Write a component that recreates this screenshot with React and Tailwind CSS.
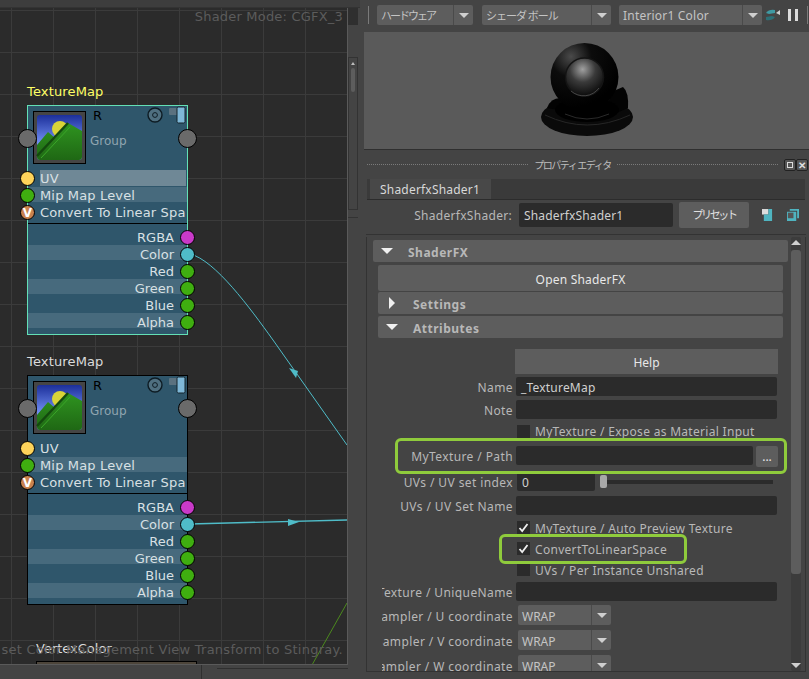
import React from 'react';

const inputsList = [
  { name: 'UV', port: 'bg-[#fdd35a]' },
  { name: 'Mip Map Level', port: 'bg-[#3fae10]' },
  { name: 'Convert To Linear Spa', port: 'bg-[#c9824e]', v: true },
];

const outputsList = [
  { name: 'RGBA', port: 'bg-[#c93ac9]' },
  { name: 'Color', port: 'bg-[#4fbcc8]', band: true },
  { name: 'Red', port: 'bg-[#3fae10]' },
  { name: 'Green', port: 'bg-[#3fae10]', band: true },
  { name: 'Blue', port: 'bg-[#3fae10]' },
  { name: 'Alpha', port: 'bg-[#3fae10]', band: true },
];

function Thumb({ id }) {
  return (
    <svg viewBox="0 0 53 53" className="w-[53px] h-[53px] block">
      <defs>
        <linearGradient id={`sky${id}`} x1="0" y1="0" x2="0" y2="1">
          <stop offset="0" stopColor="#1c2f9a" />
          <stop offset="0.6" stopColor="#6f8cf0" />
        </linearGradient>
        <linearGradient id={`hill${id}`} x1="0" y1="0" x2="0" y2="1">
          <stop offset="0" stopColor="#2f9420" />
          <stop offset="1" stopColor="#1f6814" />
        </linearGradient>
      </defs>
      <rect x="0.5" y="0.5" width="52" height="52" fill="#454545" stroke="#000" />
      <rect x="4" y="4" width="45" height="45" rx="3" fill={`url(#sky${id})`} />
      <circle cx="27" cy="18" r="8" fill="#d8d438" />
      <path d="M4 34 L15 21 L22 27 L35 12 L49 20 V46 Q49 49 46 49 H7 Q4 49 4 46 Z" fill={`url(#hill${id})`} />
      <path d="M4 45 L35 12" stroke="#134a0e" strokeWidth="2.5" fill="none" />
      <path d="M8 47 L37 16" stroke="#3aa628" strokeWidth="1" fill="none" />
    </svg>
  );
}

function NodeIcons() {
  return (
    <svg viewBox="0 0 42 18" className="w-[42px] h-[18px] block">
      <circle cx="8" cy="9" r="7" fill="#4f6f80" stroke="#0e1c24" strokeWidth="1.4" />
      <circle cx="8" cy="9" r="2.4" fill="none" stroke="#0e1c24" />
      <rect x="22" y="2" width="10" height="7" rx="1" fill="#5b7280" />
      <rect x="30" y="1" width="8" height="16" rx="1.5" fill="#7fb8d8" stroke="#14242d" />
    </svg>
  );
}

function TextureNode({ selected, top, id }) {
  const borderCls = selected ? 'border-[#63e0b6]' : 'border-black';
  const labelCls = selected ? 'text-[#ffff66]' : 'text-[#dcdcdc]';
  return (
    <div className="absolute left-[27px] w-[161px]" style={{ top }}>
      <div className={`absolute left-0 -top-[22px] text-[13px] leading-[18px] tracking-[0.15px] ${labelCls}`}>TextureMap</div>
      <div className={`relative h-[230px] border ${borderCls} bg-[#2f566b]`}>
        <div className="relative h-[64px]">
          <div className="absolute left-[5px] top-[5px]"><Thumb id={id} /></div>
          <div className="absolute left-[65px] top-[1px] text-[13px] leading-[18px] text-black">R</div>
          <div className="absolute left-[62px] top-[26px] text-[12px] leading-[18px] text-[#8fa5b0]">Group</div>
          <div className="absolute right-[-2px] top-0"><NodeIcons /></div>
          <div className="absolute -left-[10px] top-[23px] w-[19px] h-[19px] rounded-full bg-[#6a6a6a] border border-black" />
          <div className="absolute -right-[10px] top-[23px] w-[19px] h-[19px] rounded-full bg-[#6a6a6a] border border-black" />
        </div>
        <div className="h-[53px]">
          {inputsList.map((it, i) => (
            <div key={it.name} className="relative h-[17px] pl-[12px]">
              {i === 0 && selected && <div className="absolute left-[12px] right-[1px] top-0 h-[16px] bg-[#6f8896]" />}
              {i === 1 && <div className="absolute left-0 right-0 top-0 h-[15px] bg-[#476a7d]" />}
              <div className="relative text-[13px] leading-[17px] tracking-[0.15px] whitespace-nowrap overflow-hidden text-[#d8e0e4]">{it.name}</div>
              <div className={`absolute -left-[8px] top-[1px] w-[15px] h-[15px] rounded-full border border-black flex items-center justify-center text-[12px] leading-none font-bold text-white ${it.port}`}>
                {it.v ? 'V' : ''}
              </div>
            </div>
          ))}
        </div>
        <div className="border-t border-black pt-[4px]">
          {outputsList.map((it) => (
            <div key={it.name} className="relative h-[17px] pr-[13px] text-right">
              {it.band && <div className="absolute left-0 right-0 top-0 h-[15px] bg-[#476a7d]" />}
              <div className="relative text-[13px] leading-[19px] text-[#d8e0e4]">{it.name}</div>
              <div className={`absolute -right-[8px] top-[2px] w-[15px] h-[15px] rounded-full border border-black ${it.port}`} />
            </div>
          ))}
        </div>
      </div>
    </div>
  );
}

function GraphPanel() {
  return (
    <div className="w-[360px] h-full shrink-0 flex flex-col bg-[#444444]">
      <div className="h-[8px] shrink-0 bg-[#3d3d3d] border-b border-[#333333]" />
      <div className="flex flex-1 min-h-0">
        <div className="w-[348px] flex flex-col">
          <div className="relative h-[657px] overflow-hidden border-r border-b border-[#5a5a5a] bg-[#2b2b2b] bg-[linear-gradient(#3b3b3b_1px,transparent_1px),linear-gradient(90deg,#3b3b3b_1px,transparent_1px)] bg-[size:42px_42px] bg-[position:11px_2px] font-['DejaVu_Sans',sans-serif]">
            <div className="absolute right-[4px] top-[1px] text-[13px] leading-[16px] tracking-[0.2px] text-[#5c5c5c] whitespace-nowrap">Shader Mode: CGFX_3</div>

            <svg className="absolute left-0 top-0 w-[347px] h-[657px]" viewBox="0 0 347 657">
              <path d="M190 246 C215 252 250 300 273 332 L347 437" fill="none" stroke="#4fbcc8" strokeWidth="1" />
              <polygon points="289,360 298,363 296,370" fill="#4fbcc8" />
              <path d="M190 516 L347 512" fill="none" stroke="#4fbcc8" strokeWidth="1.4" />
              <polygon points="288,511 299,514 288,518" fill="#4fbcc8" />
              <path d="M347 595 L312 657" fill="none" stroke="#4c8a1e" strokeWidth="1" />
            </svg>

            <TextureNode selected top={97} id="a" />
            <TextureNode top={367} id="b" />

            <div className="absolute left-[36px] top-[632px] text-[13px] leading-[18px] text-[#dcdcdc]">VertexColor</div>
            <div className="absolute left-[36px] top-[653px] w-[161px] h-[8px] border border-black bg-[#4d453a]" />
            <div className="absolute right-[4px] top-[634px] text-[13px] leading-[16px] tracking-[0.25px] text-[#5c5c5c] whitespace-nowrap">set Color Management View Transform to Stingray.</div>
          </div>
          <div className="flex-1 flex">
            <div className="w-[202px] border-r border-[#2f2f2f]" />
            <div className="ml-[15px] flex-1 h-[4px] border-b border-[#2f2f2f]" />
          </div>
        </div>
        <div className="w-[10px] flex flex-col">
          <div className="h-[17px] bg-[#2f2f2f]" />
          <div className="mt-[32px] h-[153px] border border-[#333333] flex flex-col items-center">
            <div className="mt-[4px] w-0 h-0 border-x-[2px] border-x-transparent border-b-[3px] border-b-[#bdbdbd]" />
            <div className="mt-[3px] w-[4px] h-[24px] rounded-sm bg-[#5d5d5d]" />
          </div>
          <div className="mt-[7px] border-t border-[#333333]" />
        </div>
      </div>
    </div>
  );
}

function Combo({ label, className, labelClass = '' }) {
  return (
    <div className={`h-[20px] flex rounded-[2px] bg-[#5d5d5d] ${className}`}>
      <div className={`flex-1 min-w-0 pl-[4px] leading-[20px] text-[#c4c4c4] whitespace-nowrap overflow-hidden ${labelClass}`}>{label}</div>
      <div className="w-[20px] border-l border-[#4a4a4a] flex items-center justify-center">
        <div className="w-0 h-0 border-x-[5px] border-x-transparent border-t-[5px] border-t-[#cfcfcf]" />
      </div>
    </div>
  );
}

function BallPreview() {
  return (
    <svg viewBox="0 0 100 96" className="w-[100px] h-[96px] mb-[2px]">
      <defs>
        <radialGradient id="lens" cx="0.45" cy="0.3" r="0.75">
          <stop offset="0" stopColor="#a0a0a0" />
          <stop offset="0.45" stopColor="#3a3a3a" />
          <stop offset="1" stopColor="#050505" />
        </radialGradient>
        <radialGradient id="shell" cx="0.3" cy="0.2" r="0.75">
          <stop offset="0" stopColor="#4a4a4a" />
          <stop offset="0.4" stopColor="#0c0c0c" />
          <stop offset="1" stopColor="#000" />
        </radialGradient>
      </defs>
      <ellipse cx="50" cy="75" rx="46" ry="19" fill="#0a0a0a" />
      <path d="M8 73 Q50 93 93 73" fill="none" stroke="#262626" strokeWidth="1" />
      <path d="M12 62 Q50 80 88 62" fill="none" stroke="#1e1e1e" strokeWidth="1" />
      <path d="M74 50 L86 45 Q92 50 91 66 L68 76 Z" fill="#030303" />
      <path d="M10 66 Q14 55 25 56 L32 70 Z" fill="#030303" />
      <ellipse cx="50" cy="68" rx="32" ry="12" fill="#000" />
      <circle cx="47.5" cy="35" r="34" fill="url(#shell)" />
      <circle cx="47.5" cy="35" r="19" fill="url(#lens)" stroke="#141414" strokeWidth="1.5" />
      <path d="M62 46 A19 19 0 0 1 34 49" fill="none" stroke="#6a6a6a" strokeWidth="0.6" />
      <path d="M28 72 Q50 82 72 72" fill="none" stroke="#2a2a2a" strokeWidth="1" />
    </svg>
  );
}

function FieldLabel({ children, className = '' }) {
  return (
    <div className={`w-[131px] h-[19px] shrink-0 flex justify-end overflow-hidden text-[12px] leading-[21px] text-[#b8b8b8] whitespace-nowrap tracking-[0.4px] ${className}`}>
      {children}
    </div>
  );
}

function TextField({ label, value, className = '' }) {
  return (
    <div className={`flex h-[19px] ${className}`}>
      <FieldLabel>{label}</FieldLabel>
      <div className="ml-[3px] w-[261px] h-[19px] rounded-[2px] bg-[#2b2b2b] pl-[5px] text-[12px] leading-[21px] tracking-[0.2px] text-[#d0d0d0]">{value}</div>
    </div>
  );
}

function CheckRow({ label, checked, className = '' }) {
  return (
    <div className={`flex items-center h-[21px] pl-[135px] ${className}`}>
      <div className="w-[13px] h-[13px] bg-[#2b2b2b] flex items-center justify-center">
        {checked && (
          <svg viewBox="0 0 13 13" className="w-[13px] h-[13px]">
            <path d="M2.5 7 L5.2 10 L10.5 3" fill="none" stroke="#eeeeee" strokeWidth="1.8" />
          </svg>
        )}
      </div>
      <div className="ml-[5px] pt-[2px] text-[12px] leading-[18px] tracking-[0.3px] text-[#b8b8b8] whitespace-nowrap">{label}</div>
    </div>
  );
}

function WrapRow({ label, className = '' }) {
  return (
    <div className={`flex h-[20px] ${className}`}>
      <FieldLabel className="pt-[1px] h-[20px]">{label}</FieldLabel>
      <div className="ml-[5px]"><Combo label="WRAP" className="w-[93px]" labelClass="text-[12px] pt-[2px]" /></div>
    </div>
  );
}

function SectionHead({ title, open, className = '' }) {
  return (
    <div className={`h-[22px] flex items-center rounded-[2px] bg-[#5d5d5d] ${className}`}>
      <div className="w-[35px] pl-[8px] flex items-center">
        {open ? (
          <div className="w-0 h-0 border-x-[6px] border-x-transparent border-t-[6px] border-t-[#f0f0f0]" />
        ) : (
          <div className="ml-[3px] w-0 h-0 border-y-[6px] border-y-transparent border-l-[6px] border-l-[#f0f0f0]" />
        )}
      </div>
      <div className="pt-[3px] text-[12px] font-bold leading-[19px] tracking-[0.5px] text-[#b8b8b8]">{title}</div>
    </div>
  );
}

function GreenBox({ className }) {
  return <div className={`absolute border-[3px] border-[#8fcb3c] rounded-[6px] pointer-events-none ${className}`} />;
}

function RightPanel() {
  return (
    <div className="flex-1 min-w-0 h-full flex flex-col pl-[4px] bg-[#444444] font-['Noto_Sans','Noto_Sans_CJK_JP',sans-serif]">
      {/* toolbar */}
      <div className="h-[32px] shrink-0 flex items-center -ml-[4px] pl-[8px] pb-[2px]">
        <div className="w-[1px] h-[18px] bg-[#7a7a7a]" />
        <Combo label="ハードウェア" className="ml-[8px] w-[96px]" labelClass="text-[11px] tracking-[-2px] pt-[1px]" />
        <Combo label="シェーダ ボール" className="ml-[9px] w-[129px]" labelClass="text-[11px] tracking-[-1px] pt-[1px]" />
        <Combo label="Interior1 Color" className="ml-[8px] w-[143px]" labelClass="text-[12px] tracking-[0.2px] pt-[1px]" />
        <svg viewBox="0 0 16 14" className="ml-[3px] w-[16px] h-[14px]">
          <path d="M1 5 Q4 1 10 2 L10 5 L4 6 Z" fill="#3f9aa3" />
          <path d="M10 9 Q7 13 1 12 L1 9 L7 8 Z" fill="#2c6f76" />
          <path d="M11 5 L15 2 V7 Z" fill="#cfcfcf" />
        </svg>
        <div className="ml-[7px] w-[3px] h-[12px] bg-[#dcdcdc]" />
        <div className="ml-[4px] w-[3px] h-[12px] bg-[#dcdcdc]" />
        <div className="ml-[9px] w-[1px] h-[18px] bg-[#7a7a7a]" />
      </div>

      {/* preview */}
      <div className="h-[118px] shrink-0 flex items-center justify-center bg-[#5a5a5a] border-b border-[#2f2f2f]">
        <BallPreview />
      </div>

      {/* title bar */}
      <div className="h-[29px] shrink-0 flex items-center pl-[3px] pr-[1px]">
        <div className="flex-1 border-t border-dotted border-[#7a7a7a]" />
        <div className="px-[6px] text-[10px] leading-[16px] tracking-[-1.5px] text-[#bdbdbd] whitespace-nowrap">プロパティ エディタ</div>
        <div className="flex-1 border-t border-dotted border-[#7a7a7a]" />
        <div className="ml-[6px] w-[12px] h-[12px] rounded-[2px] border border-[#222222] bg-[#555555] flex items-center justify-center">
          <div className="w-[6px] h-[6px] border border-[#dddddd]" />
        </div>
        <div className="w-[12px] h-[12px] rounded-[2px] border border-[#222222] bg-[#555555] text-[10px] leading-[10px] font-bold text-center text-[#dddddd]">✕</div>
      </div>

      {/* attribute editor frame */}
      <div className="flex-1 min-h-0 mr-[3px] ml-[2px] flex flex-col">
        <div className="h-[21px] shrink-0 mx-[1px] flex bg-[#3a3a3a] border-b border-[#2c2c2c]">
          <div className="ml-[3px] w-[121px] pl-[10px] bg-[#484848] text-[12px] leading-[22px] tracking-[0.2px] text-[#d8d8d8]">ShaderfxShader1</div>
        </div>
        <div className="h-[30px] shrink-0 flex items-center">
          <div className="w-[146px] pt-[1px] text-right text-[12px] tracking-[0.3px] text-[#b8b8b8] whitespace-nowrap">ShaderfxShader:</div>
          <div className="ml-[7px] w-[154px] h-[24px] rounded-[2px] bg-[#2b2b2b] pl-[5px] text-[12px] leading-[25px] tracking-[0.15px] text-[#d0d0d0]">ShaderfxShader1</div>
          <div className="ml-[6px] w-[70px] h-[26px] rounded-[2px] bg-[#5d5d5d] text-center text-[11px] leading-[26px] tracking-[-2.4px] text-[#e0e0e0]">プリセット</div>
          <svg viewBox="0 0 12 13" className="ml-[13px] w-[11px] h-[12px]">
            <rect x="0" y="0" width="7" height="6" fill="#dddddd" />
            <path d="M7 0 H11 V13 H2 V6 H7 Z" fill="#4fb4c0" />
          </svg>
          <svg viewBox="0 0 13 13" className="ml-[14px] w-[12px] h-[12px]">
            <path d="M3 0 H13 V10 H11 V2 H3 Z" fill="#4fb4c0" />
            <rect x="0" y="3" width="10" height="10" fill="#4fb4c0" />
            <rect x="1" y="4" width="6" height="6" fill="#555555" />
          </svg>
        </div>
        <div className="h-[10px] shrink-0 mt-[4px] border-t border-[#333333]" />

        <div className="relative h-[434px] shrink-0 overflow-hidden flex -mt-[7px] border-x border-[#333333]">
          <div className="w-[415px] shrink-0 ml-[6px] mt-[3px]">
            <SectionHead title="ShaderFX" open />
            <div className="mx-[5px]">
              <div className="mt-[3px] h-[26px] rounded-[2px] bg-[#5d5d5d] text-center text-[12px] leading-[29px] tracking-[0.2px] text-[#e8e8e8]">Open ShaderFX</div>
              <SectionHead title="Settings" className="mt-[1px]" />
              <SectionHead title="Attributes" open className="mt-[2px]" />
              <div className="-ml-[1px] pl-[5px]">
                <div className="mt-[11px] ml-[133px] w-[263px] h-[25px] bg-[#5d5d5d] text-center text-[12px] leading-[27px] text-[#e8e8e8]">Help</div>
                <TextField label="Name" value="_TextureMap" className="mt-[3px]" />
                <TextField label="Note" className="mt-[4px]" />
                <CheckRow label="MyTexture / Expose as Material Input" className="mt-[2px] !h-[20px]" />
                <div className="relative mt-[5px] flex h-[19px]">
                  <GreenBox className="left-[13px] w-[392px] -top-[8px] h-[36px]" />
                  <FieldLabel>MyTexture / Path</FieldLabel>
                  <div className="ml-[3px] w-[237px] h-[19px] rounded-[2px] bg-[#2b2b2b]" />
                  <div className="ml-[3px] w-[22px] h-[21px] rounded-[2px] bg-[#5d5d5d] text-center text-[12px] leading-[21px] text-[#e8e8e8]">...</div>
                </div>
                <div className="mt-[7px] flex items-center h-[19px]">
                  <FieldLabel>UVs / UV set index</FieldLabel>
                  <div className="ml-[4px] w-[78px] h-[19px] rounded-[2px] bg-[#2b2b2b] pl-[5px] text-[12px] leading-[22px] text-[#d0d0d0]">0</div>
                  <div className="ml-[5px] w-[7px] h-[13px] rounded-[2px] bg-[#a8a8a8]" />
                  <div className="w-[166px] h-[4px] bg-[#2b2b2b]" />
                </div>
                <TextField label="UVs / UV Set Name" className="mt-[5px]" />
                <CheckRow label="MyTexture / Auto Preview Texture" checked className="mt-[2px]" />
                <div className="relative">
                  <GreenBox className="left-[117px] w-[188px] -top-[4px] h-[30px]" />
                  <CheckRow label="ConvertToLinearSpace" checked />
                </div>
                <CheckRow label="UVs / Per Instance Unshared" />
                <TextField label="Texture / UniqueName" className="mt-[2px]" />
                <WrapRow label="Sampler / U coordinate" className="mt-[4px]" />
                <WrapRow label="Sampler / V coordinate" className="mt-[5px]" />
                <WrapRow label="Sampler / W coordinate" className="mt-[5px]" />
              </div>
            </div>
          </div>
          <div className="ml-[3px] w-[10px] flex flex-col items-center bg-[#3c3c3c] rounded-[2px]">
            <div className="mt-[3px] w-0 h-0 border-x-[5px] border-x-transparent border-b-[5px] border-b-[#cfcfcf]" />
            <div className="mt-[5px] w-[10px] h-[324px] rounded-[3px] bg-[#5d5d5d]" />
            <div className="mt-auto mb-[3px] w-0 h-0 border-x-[5px] border-x-transparent border-t-[5px] border-t-[#cfcfcf]" />
          </div>
        </div>
        <div className="flex-1 border-t border-[#333333]" />
      </div>
    </div>
  );
}

export default function App() {
  return (
    <div className="w-[809px] h-[679px] overflow-hidden flex bg-[#444444]">
      <GraphPanel />
      <RightPanel />
    </div>
  );
}
